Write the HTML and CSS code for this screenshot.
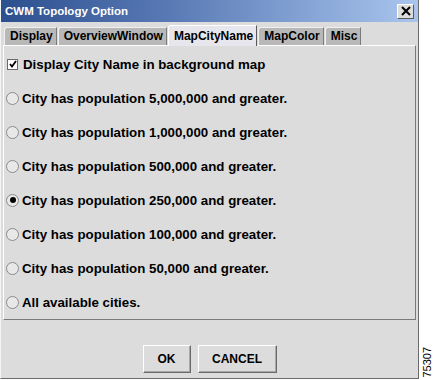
FILE: index.html
```html
<!DOCTYPE html>
<html>
<head>
<meta charset="utf-8">
<link rel="stylesheet" href="styles.css">
</head>
<body>
<div class="dialog">
  <div class="titlebar">
    <span class="title">CWM Topology Option</span>
    <span class="close"><svg width="10" height="10" viewBox="0 0 10 10"><path d="M1 1L9 9M9 1L1 9" stroke="#000" stroke-width="2"/></svg></span>
  </div>
  <div class="tabs">
    <div class="tab">Display</div>
    <div class="tab">OverviewWindow</div>
    <div class="tab selected">MapCityName</div>
    <div class="tab">MapColor</div>
    <div class="tab">Misc</div>
  </div>
  <div class="panel">
    <div class="row"><span class="check"><svg width="8" height="8" viewBox="0 0 8 8"><path d="M1 4L3 6.5L7 1" stroke="#000" stroke-width="1.8" fill="none"/></svg></span><span class="label">Display City Name in background map</span></div>
    <div class="row"><span class="radio"></span><span class="label">City has population 5,000,000 and greater.</span></div>
    <div class="row"><span class="radio"></span><span class="label">City has population 1,000,000 and greater.</span></div>
    <div class="row"><span class="radio"></span><span class="label">City has population 500,000 and greater.</span></div>
    <div class="row"><span class="radio on"></span><span class="label">City has population 250,000 and greater.</span></div>
    <div class="row"><span class="radio"></span><span class="label">City has population 100,000 and greater.</span></div>
    <div class="row"><span class="radio"></span><span class="label">City has population 50,000 and greater.</span></div>
    <div class="row"><span class="radio"></span><span class="label">All available cities.</span></div>
  </div>
  <div class="footer">
    <div class="btn ok">OK</div>
    <div class="btn cancel">CANCEL</div>
  </div>
</div>
<div class="side"><span class="fig">75307</span></div>
</body>
</html>
```
FILE: styles.css
```css
html, body {
  margin: 0;
  padding: 0;
  background: #ffffff;
}
body {
  display: flex;
  width: 434px;
  height: 380px;
  overflow: hidden;
  font-family: "Liberation Sans", Arial, sans-serif;
}
.dialog {
  width: 418px;
  height: 378px;
  background: #dcdcdc;
  border-left: 1px solid #f4f4f4;
  border-right: 1px solid #6a6a6a;
  border-bottom: 1px solid #6a6a6a;
  display: flex;
  flex-direction: column;
}
.titlebar {
  height: 22px;
  background: linear-gradient(to right, #2c4f8e 0%, #5879b4 40%, #a9c5ee 100%);
  display: flex;
  align-items: center;
  justify-content: space-between;
  padding: 0 4px 0 4px;
}
.title {
  color: #ffffff;
  font-weight: bold;
  font-size: 11.5px;
}
.close {
  width: 15px;
  height: 13px;
  background: #dcdcdc;
  border: 1px solid;
  border-color: #ffffff #5a5a5a #5a5a5a #ffffff;
  display: flex;
  align-items: center;
  justify-content: center;
}
.tabs {
  display: flex;
  align-items: flex-end;
  height: 23px;
  padding-left: 3px;
}
.tab {
  height: 17px;
  line-height: 17px;
  padding: 0 3px 0 5px;
  font-weight: bold;
  font-size: 12px;
  color: #000;
  background: #b8b8b8;
  border-top: 1px solid #f0f0f0;
  border-left: 1px solid #f0f0f0;
  border-right: 1px solid #7a7a7a;
  border-top-left-radius: 3px;
  margin-right: 1px;
}
.tab.selected {
  height: 20px;
  line-height: 20px;
  background: #e6e6ec;
  border-top: 1px solid #ffffff;
  border-left: 1px solid #ffffff;
  border-right: 1px solid #5a5a5a;
  margin-bottom: -1px;
  position: relative;
  z-index: 1;
}
.panel {
  margin: 0 2px 0 2px;
  height: 275px;
  box-sizing: border-box;
  border-top: 1px solid #ffffff;
  border-left: 1px solid #ffffff;
  border-right: 1px solid #7a7a7a;
  border-bottom: 1px solid #7a7a7a;
  display: flex;
  flex-direction: column;
  padding-top: 1px;
}
.row {
  height: 34px;
  flex: none;
  display: flex;
  align-items: center;
  gap: 3px;
  padding-left: 2px;
  font-weight: bold;
  font-size: 13.3px;
  color: #000;
}
.check {
  width: 9px;
  height: 9px;
  margin-left: 1px;
  margin-right: 2px;
  background: #ffffff;
  border: 1px solid #6a6a6a;
  display: flex;
  align-items: center;
  justify-content: center;
}
.radio {
  width: 11px;
  height: 11px;
  border-radius: 50%;
  border: 1px solid #8a8a8a;
  background: #e8e8e8;
  display: flex;
  align-items: center;
  justify-content: center;
}
.radio.on::after {
  content: "";
  width: 6px;
  height: 6px;
  border-radius: 50%;
  background: #000;
}
.footer {
  flex: 1;
  display: flex;
  justify-content: center;
  align-items: center;
  gap: 7px;
  padding-top: 20px;
}
.btn {
  height: 26px;
  line-height: 26px;
  text-align: center;
  font-weight: bold;
  font-size: 12px;
  background: #dcdcdc;
  border: 1px solid;
  border-color: #ffffff #6a6a6a #6a6a6a #ffffff;
  box-shadow: inset -1px -1px 0 #a8a8a8;
}
.btn.ok { width: 46px; }
.btn.cancel { width: 77px; }
.side {
  width: 15px;
  display: flex;
  flex-direction: column;
  justify-content: flex-end;
  align-items: center;
}
.fig {
  writing-mode: vertical-rl;
  transform: rotate(180deg);
  font-size: 11px;
  font-family: "Liberation Sans", Arial, sans-serif;
  color: #000;
  padding-top: 2px;
}
```
